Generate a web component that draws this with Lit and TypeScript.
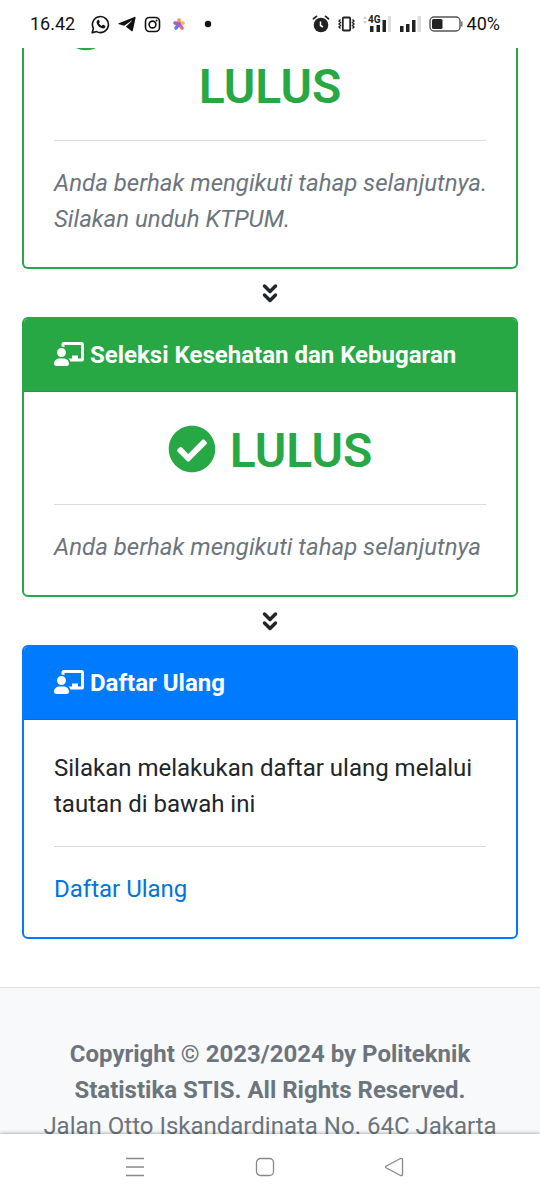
import { LitElement, html, css } from "lit";
import { customElement } from "lit/decorators.js";

const checkIcon = html`<svg class="check" viewBox="0 0 512 512" aria-hidden="true">
  <path d="M504 256c0 136.967-111.033 248-248 248S8 392.967 8 256 119.033 8 256 8s248 111.033 248 248zM227.314 387.314l184-184c6.248-6.248 6.248-16.379 0-22.627l-22.627-22.627c-6.248-6.249-16.379-6.249-22.628 0L216 308.118l-70.059-70.059c-6.248-6.248-16.379-6.248-22.628 0l-22.627 22.627c-6.248 6.248-6.248 16.379 0 22.627l104 104c6.249 6.249 16.379 6.249 22.628.001z" />
</svg>`;

const boardIcon = html`<svg class="board" viewBox="0 0 640 512" aria-hidden="true">
  <path d="M208 352H112C50 352 0 402 0 464c0 27 21 48 48 48h224c27 0 48-21 48-48 0-62-50-112-112-112zm-48-32c53 0 96-43 96-96s-43-96-96-96-96 43-96 96 43 96 96 96zM592 0H208c-26.500 0-48 22-48 49.600V96c23.400 0 45 6.800 64 17.800V64h352v288h-64v-64H384v64h-76c19 16.700 33 38.700 39.700 64H592c26.500 0 48-22 48-49.600V49.600C640 22 618.500 0 592 0z" />
</svg>`;

const downIcon = html`<svg class="down" viewBox="0 0 24 24" aria-hidden="true">
  <path d="M6.500 5l5.500 5.500L17.500 5M6.500 14l5.500 5.500 5.500-5.500" />
</svg>`;

@customElement("app-root")
export class AppRoot extends LitElement {
  static styles = css`
    :host {
      display: flex;
      flex-direction: column;
      height: 100vh;
      background: #fff;
      color: #212529;
      font: 24px/36px Roboto, sans-serif;
    }
    * {
      box-sizing: border-box;
    }
    svg {
      display: block;
      flex: none;
    }
    .status {
      flex: none;
      height: 48px;
      padding: 0 40px 0 30px;
      display: flex;
      align-items: center;
      justify-content: space-between;
      font-size: 18px;
      line-height: 24px;
      color: #111;
    }
    .group {
      display: flex;
      align-items: center;
      gap: 8px;
    }
    .apps {
      margin-left: 8px;
    }
    .battery {
      display: flex;
      align-items: center;
      gap: 4px;
    }
    .view {
      flex: 1;
      min-height: 0;
      overflow: hidden;
    }
    .steps {
      padding: 0 22px 48px;
    }
    .card {
      border: 2px solid #28a745;
      border-radius: 6px;
      overflow: hidden;
    }
    .card.open {
      border-color: #007bff;
    }
    .card.scrolled {
      margin-top: -48px;
      border-top: 0;
      border-radius: 0 0 6px 6px;
    }
    .head {
      display: flex;
      align-items: center;
      gap: 6px;
      margin: 0;
      padding: 18px 30px;
      font-size: 24px;
      line-height: 36px;
      font-weight: 700;
      color: #fff;
      background: #28a745;
      border-bottom: 1px solid #249640;
    }
    .open .head {
      background: #007bff;
      border-bottom-color: #006fe6;
    }
    .board {
      width: 30px;
      height: 24px;
      margin-bottom: 2px;
      fill: #fff;
    }
    .body {
      padding: 30px;
    }
    .scrolled .body {
      padding-top: 0;
    }
    .result {
      display: flex;
      align-items: center;
      justify-content: center;
      flex-wrap: wrap;
      gap: 0 14px;
      margin: 0;
      font-size: 48px;
      line-height: 58px;
      font-weight: 600;
      color: #28a745;
    }
    .result.stacked {
      flex-direction: column;
    }
    .first {
      align-self: stretch;
      display: flex;
      align-items: center;
      height: 58px;
      padding-left: 8px;
    }
    .check {
      width: 48px;
      height: 48px;
      margin-bottom: 4px;
      fill: #28a745;
    }
    hr {
      height: 1px;
      margin: 24px 0;
      border: 0;
      background: #dcdcdc;
    }
    p {
      margin: 0;
    }
    .note {
      margin-right: -8px;
      font-style: italic;
      color: #6c757d;
    }
    a {
      color: #0275d8;
      text-decoration: none;
    }
    .next {
      display: flex;
      align-items: center;
      justify-content: center;
      height: 48px;
    }
    .down {
      width: 24px;
      height: 24px;
      fill: none;
      stroke: #212529;
      stroke-width: 3.500;
      stroke-linecap: round;
      stroke-linejoin: round;
    }
    .foot {
      padding: 48px 30px;
      border-top: 1px solid #dee2e6;
      background: #f8f9fa;
      color: #6c757d;
      text-align: center;
    }
    .foot strong {
      display: block;
      font-weight: 700;
    }
    .nav {
      flex: none;
      position: relative;
      height: 66px;
      padding: 0 121px 0 110px;
      display: flex;
      align-items: center;
      justify-content: space-between;
      background: #fff;
      box-shadow: 0 0 4px rgba(0, 0, 0, 0.45);
    }
    .nav button {
      display: grid;
      place-items: center;
      width: 50px;
      height: 48px;
      padding: 0;
      border: 0;
      background: none;
    }
    .nav svg {
      width: 20px;
      height: 20px;
      fill: none;
      stroke: #888;
      stroke-width: 1.300;
      stroke-linejoin: round;
    }
  `;

  render() {
    return html`
      <header class="status">
        <div class="group">
          <span>16.42</span>
          <svg class="apps" width="19" height="19" viewBox="0 0 19 19" fill="none" stroke="#111">
            <path stroke-width="1.600" stroke-linejoin="round" d="M1.200 17.800l1.200-4.400A8 8 0 1 1 5.600 16.600z" />
            <path fill="#111" stroke="none" d="M6.700 4.900c.4-.4 1-.3 1.200.1l.8 1.800c.1.300 0 .5-.2.800l-.6.700c.6 1.200 1.600 2.100 2.900 2.700l.8-1c.2-.2.400-.3.700-.2l1.800.9c.3.200.4.400.3.800-.2 1.300-1.300 2-2.500 1.900-3.400-.5-6.100-3.300-6.300-6.100 0-1 .5-1.900 1.100-2.400z" />
          </svg>
          <svg width="18" height="16" viewBox="0 0 18 16">
            <path fill="#111" d="M.8 7.200L16.400.9c.8-.3 1.300.1 1.100 1l-2.600 12.500c-.2.900-.8 1.100-1.500.7l-5.500-4.300L14 4.700c.2-.3 0-.4-.3-.2L6.200 9.700.9 8.200c-.7-.2-.7-.7-.1-1z" />
          </svg>
          <svg width="17" height="17" viewBox="0 0 17 17" fill="none" stroke="#111" stroke-width="1.600">
            <rect x="1.500" y="1.500" width="14" height="14" rx="4" />
            <circle cx="8.500" cy="8.500" r="3.400" />
            <circle cx="12.600" cy="4.400" r="1" fill="#111" stroke="none" />
          </svg>
          <svg width="20" height="14" viewBox="0 0 20 14">
            <g stroke-width="3.600" stroke-linecap="round">
              <path stroke="#f59a3c" d="M10 7V3" />
              <path stroke="#f8b84e" d="M10 7l4-1" />
              <path stroke="#ef5f86" d="M10 7l3 4" />
              <path stroke="#5a7bea" d="M10 7l-3 4" />
              <path stroke="#a55fd0" d="M10 7L6 6" />
            </g>
          </svg>
          <svg width="22" height="8" viewBox="0 0 22 8"><circle cx="11" cy="4" r="3.200" fill="#111" /></svg>
        </div>
        <div class="group">
          <svg width="18" height="18" viewBox="0 0 18 18" fill="none" stroke="#222">
            <circle cx="9" cy="10" r="7.300" fill="#222" stroke="none" />
            <path stroke-width="1.800" stroke-linecap="round" d="M1.500 3.800l3-2.400M16.500 3.800l-3-2.400" />
            <path stroke="#fff" stroke-width="1.500" d="M8.500 6.500v4l2.500 1.500" />
          </svg>
          <svg width="17" height="16" viewBox="0 0 17 16" fill="none" stroke="#222">
            <rect x="4.800" y="1.500" width="7.400" height="13" rx="1" stroke-width="1.800" />
            <path stroke-width="1.400" d="M2.500 3.500l-1.500 1.500 1.500 1.500-1.500 1.500 1.500 1.500-1.500 1.500 1.500 1.500M14.500 3.500l1.500 1.500-1.500 1.500 1.500 1.500-1.500 1.500 1.500 1.500-1.500 1.500" />
          </svg>
          <svg width="28" height="24" viewBox="0 0 28 24">
            <path fill="#ccc" d="M0 7l2-3 2 3zM0 9l2 3 2-3z" />
            <path fill="#222" d="M7 14h3.500v6H7zM13.500 13H17v7h-3.500zM19.500 8H23v12h-3.500z" />
            <path fill="#ddd" d="M25 4h3v16h-3z" />
            <text x="5" y="11" font-size="10" font-weight="700" fill="#222" stroke="#fff" stroke-width="1" paint-order="stroke">4G</text>
          </svg>
          <svg width="22" height="24" viewBox="0 0 22 24">
            <path fill="#222" d="M1 14h3.500v6H1zM7 12h3.500v8H7zM13 8h3.500v12H13z" />
            <path fill="#ddd" d="M18.500 4H22v16h-3.500z" />
          </svg>
          <div class="battery">
            <svg width="34" height="18" viewBox="0 0 34 18">
              <rect x="1" y="2" width="30" height="14" rx="4" fill="none" stroke="#555" stroke-width="1.400" />
              <rect x="3" y="4" width="10.500" height="10" rx="1.500" fill="#222" />
              <path fill="#777" d="M32 6.500h1.500v5H32z" />
            </svg>
            <span>40%</span>
          </div>
        </div>
      </header>

      <main class="view">
        <div class="steps">
          <section class="card scrolled">
            <div class="body">
              <h2 class="result stacked"><span class="first">${checkIcon}</span><span>LULUS</span></h2>
              <hr />
              <p class="note">Anda berhak mengikuti tahap selanjutnya. Silakan unduh KTPUM.</p>
            </div>
          </section>
          <div class="next">${downIcon}</div>
          <section class="card">
            <h3 class="head">${boardIcon}<span>Seleksi Kesehatan dan Kebugaran</span></h3>
            <div class="body">
              <h2 class="result">${checkIcon}<span>LULUS</span></h2>
              <hr />
              <p class="note">Anda berhak mengikuti tahap selanjutnya</p>
            </div>
          </section>
          <div class="next">${downIcon}</div>
          <section class="card open">
            <h3 class="head">${boardIcon}<span>Daftar Ulang</span></h3>
            <div class="body">
              <p>Silakan melakukan daftar ulang melalui tautan di bawah ini</p>
              <hr />
              <p><a href="#">Daftar Ulang</a></p>
            </div>
          </section>
        </div>
        <footer class="foot">
          <strong>Copyright © 2023/2024 by Politeknik Statistika STIS. All Rights Reserved.</strong>
          <span>Jalan Otto Iskandardinata No. 64C Jakarta</span>
        </footer>
      </main>

      <nav class="nav">
        <button aria-label="Menu"><svg viewBox="0 0 20 20"><path d="M1 1.500h18M1 10h18M1 18.500h18" /></svg></button>
        <button aria-label="Home"><svg viewBox="0 0 20 20"><rect x="1.500" y="1.500" width="17" height="17" rx="4" /></svg></button>
        <button aria-label="Back"><svg viewBox="0 0 20 20"><path d="M2 9.200L16.500 1.500Q18.500 1 18.500 3v14Q18.500 19 16.500 18.500L2 10.800Q1 10 2 9.200z" /></svg></button>
      </nav>
    `;
  }
}
